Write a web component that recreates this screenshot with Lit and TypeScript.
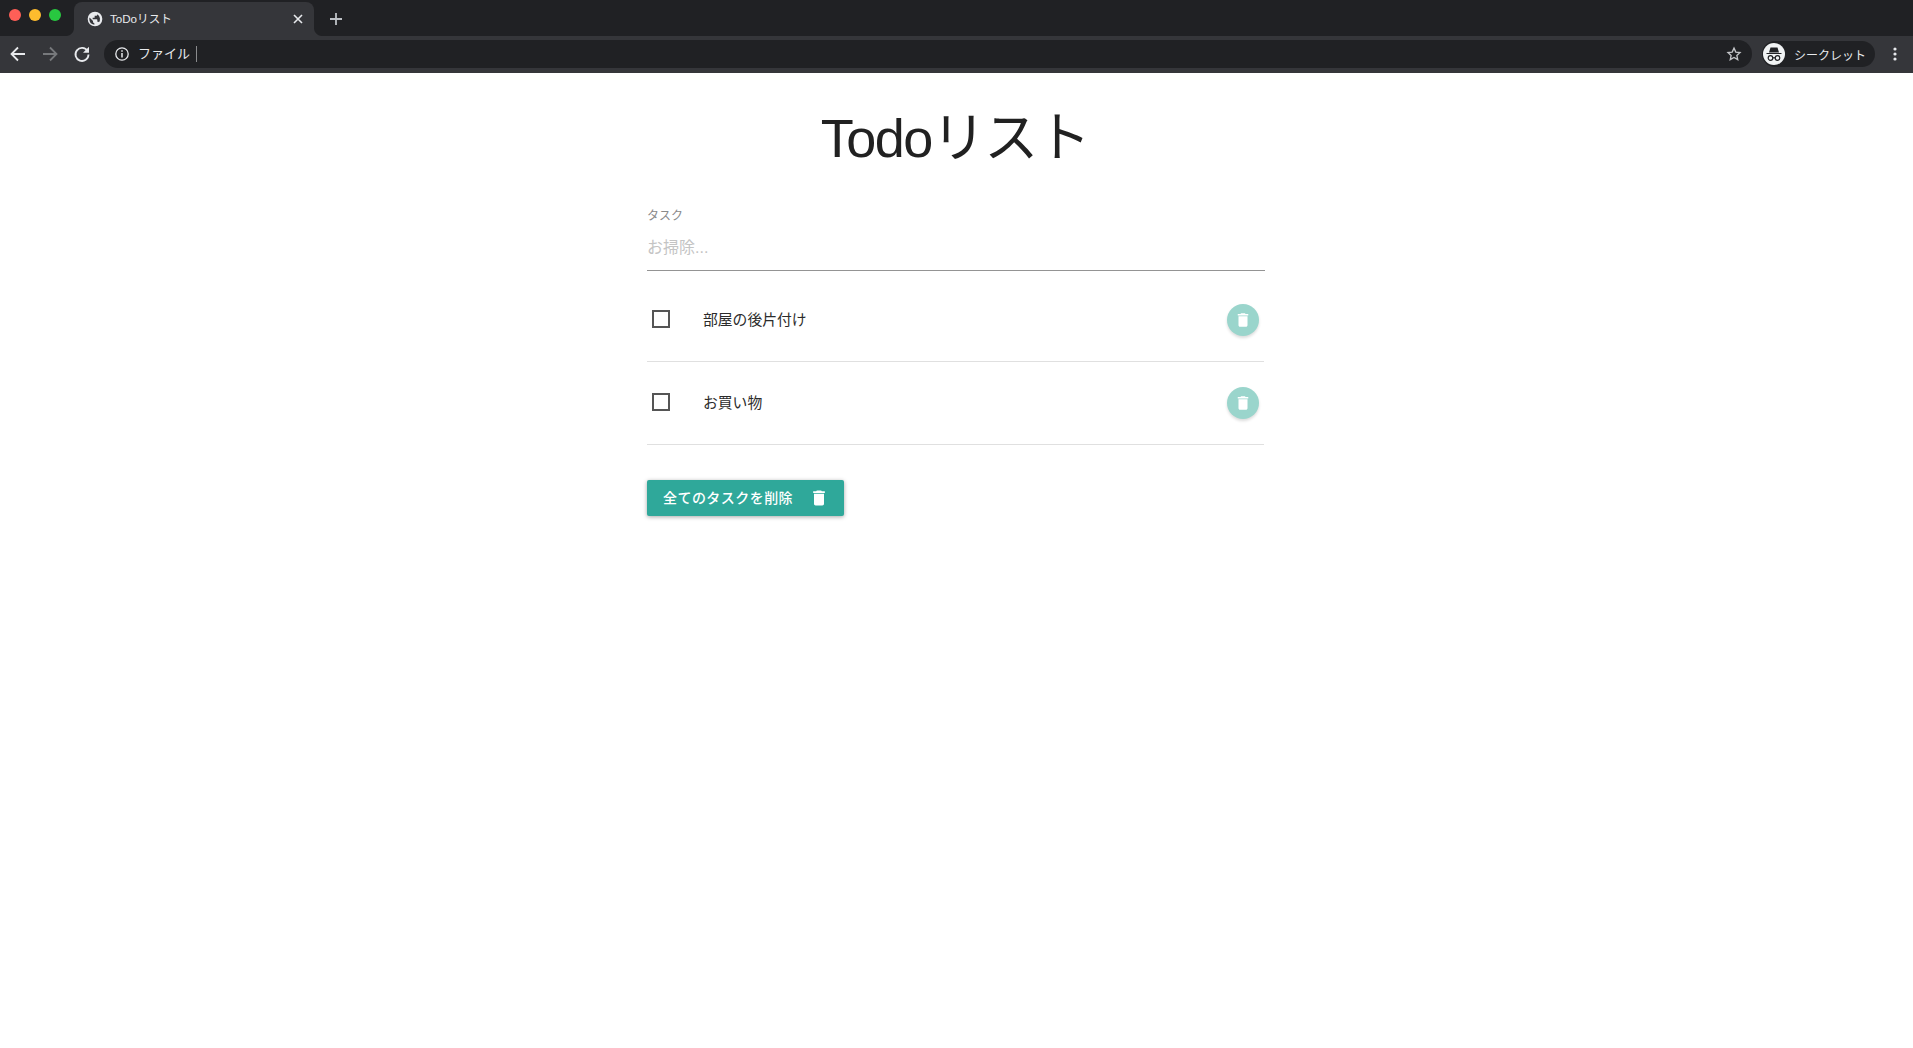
import { LitElement, html, css, svg } from "lit";
import { customElement } from "lit/decorators.js";

const trash = svg`<path fill="currentColor" d="M6 19c0 1.100.9 2 2 2h8c1.100 0 2-.9 2-2V7H6v12zM19 4h-3.500l-1-1h-5l-1 1H5v2h14V4z"/>`;

@customElement("app-root")
export class AppRoot extends LitElement {
  static styles = css`
    :host { display: block; min-height: 1048px; background: #fff; font-family: "Liberation Sans", "Noto Sans CJK JP", sans-serif; color: #222; }
    .tabs { height: 36px; background: #202124; display: flex; align-items: flex-end; box-sizing: border-box; }
    .lights { display: flex; gap: 8px; padding: 0 0 15px 9px; width: 74px; box-sizing: border-box; align-self: flex-end; }
    .lights i { width: 12px; height: 12px; border-radius: 50%; flex: none; }
    .red { background: #ff5f57; } .yellow { background: #febc2e; } .green { background: #28c840; }
    .tab { position: relative; width: 240px; height: 34px; background: #35363a; border-radius: 8px 8px 0 0; display: flex; align-items: center; box-sizing: border-box; padding: 0 8px 0 13px; color: #e8eaed; font-size: 11.6px; }
    .tab::before, .tab::after { content: ""; position: absolute; bottom: 0; width: 8px; height: 8px; }
    .tab::before { left: -8px; background: radial-gradient(circle at 0 0, #202124 7.5px, #35363a 8.5px); }
    .tab::after { right: -8px; background: radial-gradient(circle at 100% 0, #202124 7.5px, #35363a 8.5px); }
    .tab .title { flex: 1; margin-left: 7px; padding-bottom: 2px; }
    .newtab { margin: 0 0 8px 13px; color: #bdc1c6; display: flex; }
    .toolbar { height: 37px; background: #35363a; display: flex; align-items: center; box-sizing: border-box; padding: 0 10px 1px 9px; }
    .nav { display: flex; flex: none; width: 32px; }
    .nav.last { width: 18px; }
    .omni { flex: 1; height: 28px; margin-left: 13px; border-radius: 14px; background: #202124; display: flex; align-items: center; padding: 0 10px 0 10px; color: #e8eaed; font-size: 13px; }
    .file { margin-left: 8px; padding-right: 6px; border-right: 1px solid #8a8b8d; line-height: 16px; }
    .spacer { flex: 1; }
    .pill { width: 113px; height: 26px; margin-left: 10px; border-radius: 13px; background: #202124; display: flex; align-items: center; box-sizing: border-box; padding-left: 1px; color: #e8eaed; font-size: 12px; gap: 9px; flex: none; }
    .avatar { width: 22px; height: 22px; border-radius: 50%; background: #f1f3f4; display: flex; align-items: center; justify-content: center; color: #202124; flex: none; }
    .menu { margin-left: 12px; display: flex; flex: none; }
    svg { display: block; flex: none; }
    main { width: 618px; margin: 0 0 0 647px; }
    h1 { margin: 0; padding: 28px 2px 0 0; height: 78px; font-weight: 400; font-size: 54px; line-height: 74px; text-align: center; letter-spacing: -1.5px; color: #212121; }
    .field { margin-top: 28px; height: 64px; border-bottom: 1px solid #949494; box-sizing: border-box; }
    .label { font-size: 12px; line-height: 14px; color: #8a8a8a; padding-top: 2px; }
    .ph { font-size: 16px; line-height: 20px; color: #c4c4c4; margin-top: 15px; }
    .row { height: 83px; margin-right: 1px; box-sizing: border-box; border-bottom: 1px solid #e0e0e0; display: flex; align-items: center; padding: 0 5px; font-size: 14.8px; color: #2b2b2b; }
    .first { margin-top: 8px; }
    .check { width: 18px; height: 18px; border: 2px solid #555; box-sizing: border-box; flex: none; margin-right: 33px; margin-bottom: 2px; }
    .text { flex: 1; padding-bottom: 4px; }
    .del { width: 32px; height: 32px; border-radius: 50%; background: #9ad5cc; color: #fff; display: flex; align-items: center; justify-content: center; box-shadow: 0 2px 3px rgba(0,0,0,.14); }
    .all { margin-top: 35px; width: 197px; height: 36px; background: #2fa89a; border-radius: 2px; color: #fff; display: flex; align-items: center; box-sizing: border-box; padding: 0 0 3px 16px; font-size: 14px; font-weight: 500; letter-spacing: .45px; box-shadow: 0 1px 4px rgba(0,0,0,.35); }
    .all svg { margin: 3px 0 0 16px; }
  `;

  private row(text: string, first = false) {
    return html`<div class="row ${first ? "first" : ""}">
      <span class="check"></span><span class="text">${text}</span>
      <span class="del"><svg width="18" height="18" viewBox="0 0 24 24">${trash}</svg></span>
    </div>`;
  }

  render() {
    return html`
      <div class="tabs">
        <div class="lights"><i class="red"></i><i class="yellow"></i><i class="green"></i></div>
        <div class="tab">
          <svg width="16" height="16" viewBox="0 0 24 24"><path fill="#e8eaed" d="M12 1a11 11 0 1 0 0 22 11 11 0 0 0 0-22zM3.500 12c0-.8.1-1.500.3-2.200L9 15v1.200c0 1.100.9 2 2 2v2.300A8.500 8.500 0 0 1 3.500 12zm14.900 5.600c-.3-.8-1-1.400-1.900-1.400h-1v-3c0-.6-.4-1-1-1H8.500v-2h2c.6 0 1-.4 1-1v-2h2c1.100 0 2-.9 2-2v-.4a8.500 8.500 0 0 1 1.900 12.800z"/></svg>
          <span class="title">ToDoリスト</span>
          <svg width="16" height="16" viewBox="0 0 16 16"><path stroke="#e8eaed" stroke-width="1.600" d="M4 4l8 8M12 4l-8 8"/></svg>
        </div>
        <div class="newtab"><svg width="18" height="18" viewBox="0 0 18 18"><path stroke="currentColor" stroke-width="1.800" d="M9 3v12M3 9h12"/></svg></div>
      </div>
      <div class="toolbar">
        <span class="nav"><svg width="18" height="18" viewBox="0 0 18 18"><path fill="none" stroke="#e8eaed" stroke-width="1.800" d="M16 9H3M9 2.500L2.500 9 9 15.500"/></svg></span>
        <span class="nav"><svg width="18" height="18" viewBox="0 0 18 18"><path fill="none" stroke="#77797c" stroke-width="1.800" d="M2 9h13M9 2.500L15.500 9 9 15.500"/></svg></span>
        <span class="nav last"><svg width="18" height="18" viewBox="0 0 18 18"><path fill="none" stroke="#e8eaed" stroke-width="1.800" d="M14.500 6A6.500 6.500 0 1 0 15.500 9.500"/><path fill="#e8eaed" d="M16 1.800v6h-6z"/></svg></span>
        <div class="omni">
          <svg width="16" height="16" viewBox="0 0 16 16"><circle cx="8" cy="8" r="6.200" fill="none" stroke="#e8eaed" stroke-width="1.300"/><path stroke="#e8eaed" stroke-width="1.500" d="M8 7v4.500M8 4.200v1.600"/></svg>
          <span class="file">ファイル</span>
          <span class="spacer"></span>
          <svg width="16" height="16" viewBox="0 0 24 24"><path fill="none" stroke="#c4c6c9" stroke-width="2" d="M12 3.200l2.700 5.900 6.300.7-4.700 4.300 1.300 6.300L12 17.200l-5.600 3.200 1.300-6.300L3 9.800l6.300-.7z"/></svg>
        </div>
        <div class="pill">
          <span class="avatar"><svg width="18" height="18" viewBox="0 0 18 18"><path fill="#202124" d="M1.500 8h15v1h-15zM4 7.500L5.500 2.500h7L14 7.500z"/><g fill="none" stroke="#202124" stroke-width="1.200"><circle cx="5.500" cy="13" r="2.300"/><circle cx="12.500" cy="13" r="2.300"/><path d="M7.800 12.800h2.400"/></g></svg></span>
          <span>シークレット</span>
        </div>
        <span class="menu"><svg width="16" height="18" viewBox="0 0 16 18"><g fill="#e8eaed"><circle cx="8" cy="4" r="1.600"/><circle cx="8" cy="9" r="1.600"/><circle cx="8" cy="14" r="1.600"/></g></svg></span>
      </div>
      <main>
        <h1>Todoリスト</h1>
        <div class="field">
          <div class="label">タスク</div>
          <div class="ph">お掃除...</div>
        </div>
        ${this.row("部屋の後片付け", true)}
        ${this.row("お買い物")}
        <div class="all">全てのタスクを削除<svg width="20" height="20" viewBox="0 0 24 24">${trash}</svg></div>
      </main>
    `;
  }
}
